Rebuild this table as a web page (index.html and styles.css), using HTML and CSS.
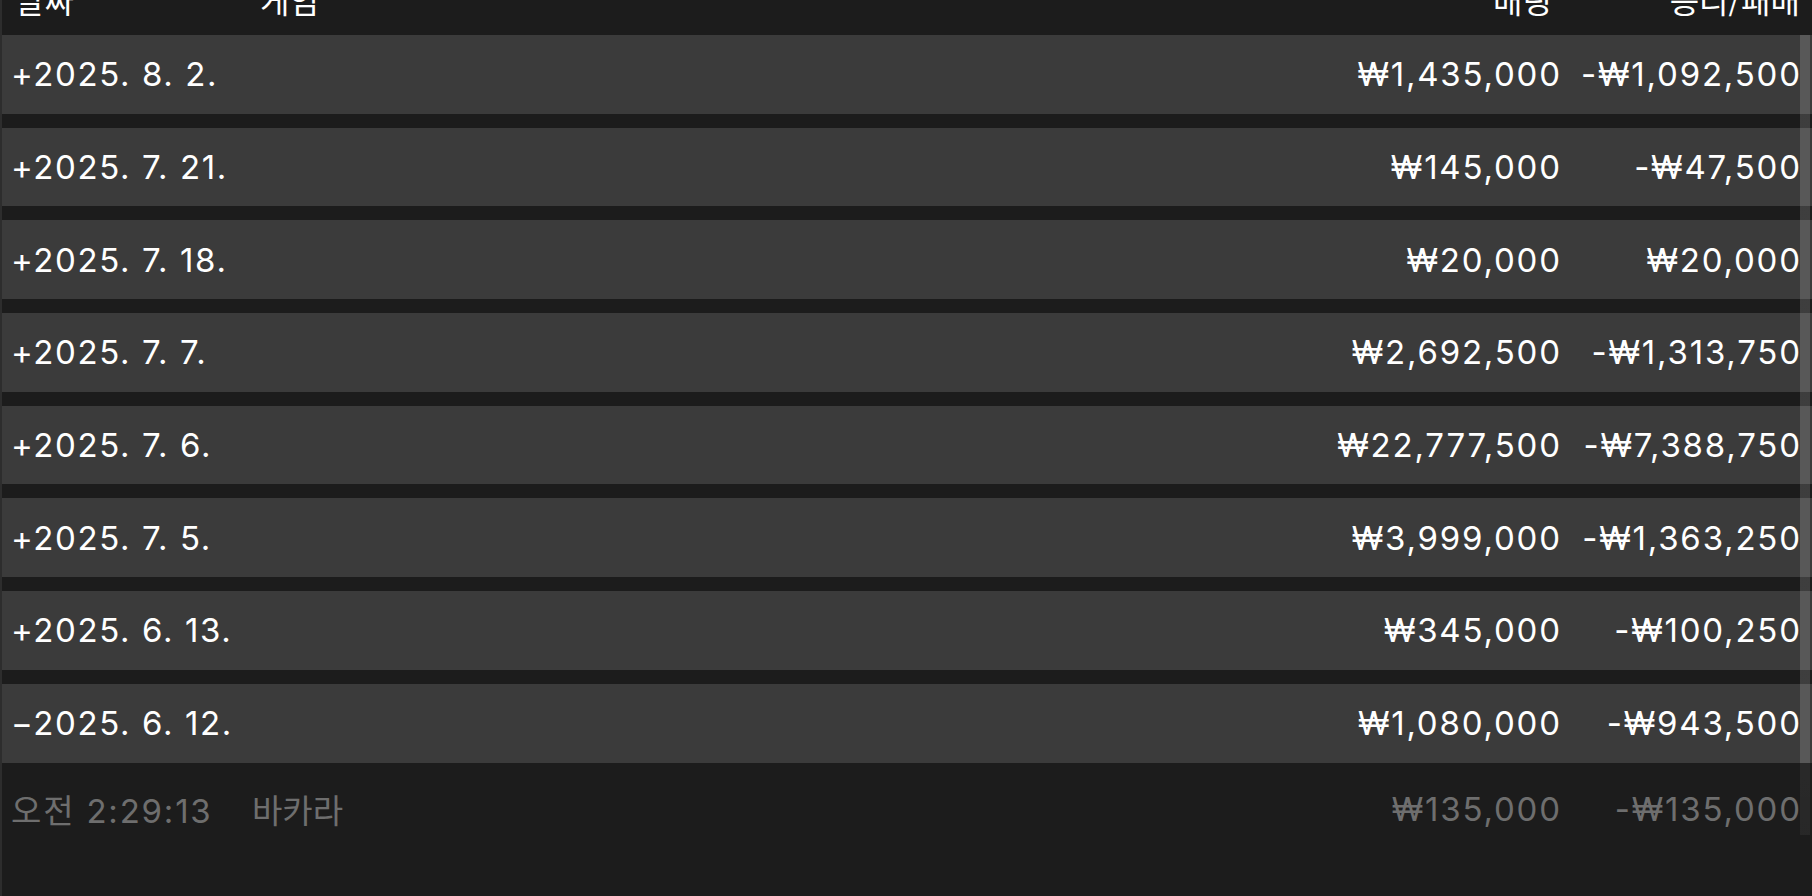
FILE: index.html
```html
<!DOCTYPE html>
<html lang="ko">
<head>
<meta charset="utf-8">
<title>기록</title>
<link rel="stylesheet" href="styles.css">
</head>
<body>
<div class="page">
  <div class="head">
    <span class="h-date">날짜</span>
    <span class="h-game">게임</span>
    <span class="h-bet">배팅</span>
    <span class="h-result">승리/패배</span>
  </div>
  <div class="list">
    <div class="row"><span class="date">+2025. 8. 2.</span><span class="game"></span><span class="num">₩1,435,000</span><span class="num">-₩1,092,500</span></div>
    <div class="row"><span class="date">+2025. 7. 21.</span><span class="game"></span><span class="num">₩145,000</span><span class="num">-₩47,500</span></div>
    <div class="row"><span class="date">+2025. 7. 18.</span><span class="game"></span><span class="num">₩20,000</span><span class="num">₩20,000</span></div>
    <div class="row"><span class="date">+2025. 7. 7.</span><span class="game"></span><span class="num">₩2,692,500</span><span class="num">-₩1,313,750</span></div>
    <div class="row"><span class="date">+2025. 7. 6.</span><span class="game"></span><span class="num">₩22,777,500</span><span class="num">-₩7,388,750</span></div>
    <div class="row"><span class="date">+2025. 7. 5.</span><span class="game"></span><span class="num">₩3,999,000</span><span class="num">-₩1,363,250</span></div>
    <div class="row"><span class="date">+2025. 6. 13.</span><span class="game"></span><span class="num">₩345,000</span><span class="num">-₩100,250</span></div>
    <div class="row row-open"><span class="date">−2025. 6. 12.</span><span class="game"></span><span class="num">₩1,080,000</span><span class="num">-₩943,500</span></div>
    <div class="detail"><span class="time">오전 2:29:13</span><span class="dgame">바카라</span><span class="num">₩135,000</span><span class="num">-₩135,000</span></div>
  </div>
  <div class="scrollbar"></div>
</div>
</body>
</html>
```

FILE: styles.css
```css
html, body {
  margin: 0;
  padding: 0;
  background: #1c1c1c;
}
body {
  width: 1812px;
  height: 896px;
  overflow: hidden;
  font-family: Inter, "Noto Sans CJK KR", sans-serif;
  color: #ffffff;
}
.page {
  position: relative;
  height: 896px;
  border-left: 2px solid #2d2d2d;
  box-sizing: border-box;
}
.head {
  height: 35px;
  display: grid;
  grid-template-columns: 245px 1fr 240px 240px;
  padding: 0 12px 0 13px;
  align-items: end;
  font-family: "Noto Sans CJK KR", sans-serif;
  font-size: 32px;
  line-height: 32px;
  overflow: hidden;
}
.head span {
  display: block;
  transform: translateY(-20px);
}
.h-bet, .h-result {
  text-align: right;
}
.h-bet {
  padding-right: 8px;
}
.list {
  display: flex;
  flex-direction: column;
}
.row {
  height: 78.7px;
  margin-bottom: 14px;
  background: #3b3b3b;
  display: grid;
  grid-template-columns: 249px 1fr 240px 240px;
  align-items: center;
  padding: 0 12px 0 9px;
  font-size: 33px;
  letter-spacing: 1.8px;
}
.date {
  letter-spacing: 1.6px;
}
.row-open {
  margin-bottom: 0;
}
.num {
  text-align: right;
  white-space: nowrap;
  margin-right: -1.8px;
}
.detail {
  height: 92px;
  display: grid;
  grid-template-columns: 241px 1fr 240px 240px;
  align-items: center;
  padding: 0 12px 0 9px;
  font-size: 33px;
  letter-spacing: 1.8px;
  color: #6e6e6e;
}
.dgame {
  letter-spacing: 0;
}
.scrollbar {
  position: absolute;
  left: 1798px;
  top: 35px;
  width: 10px;
  height: 800px;
  background: linear-gradient(to bottom, rgba(255,255,255,0.15) 0, rgba(255,255,255,0.15) 91%, rgba(255,255,255,0.06) 91%, rgba(255,255,255,0.05) 100%);
}
```
